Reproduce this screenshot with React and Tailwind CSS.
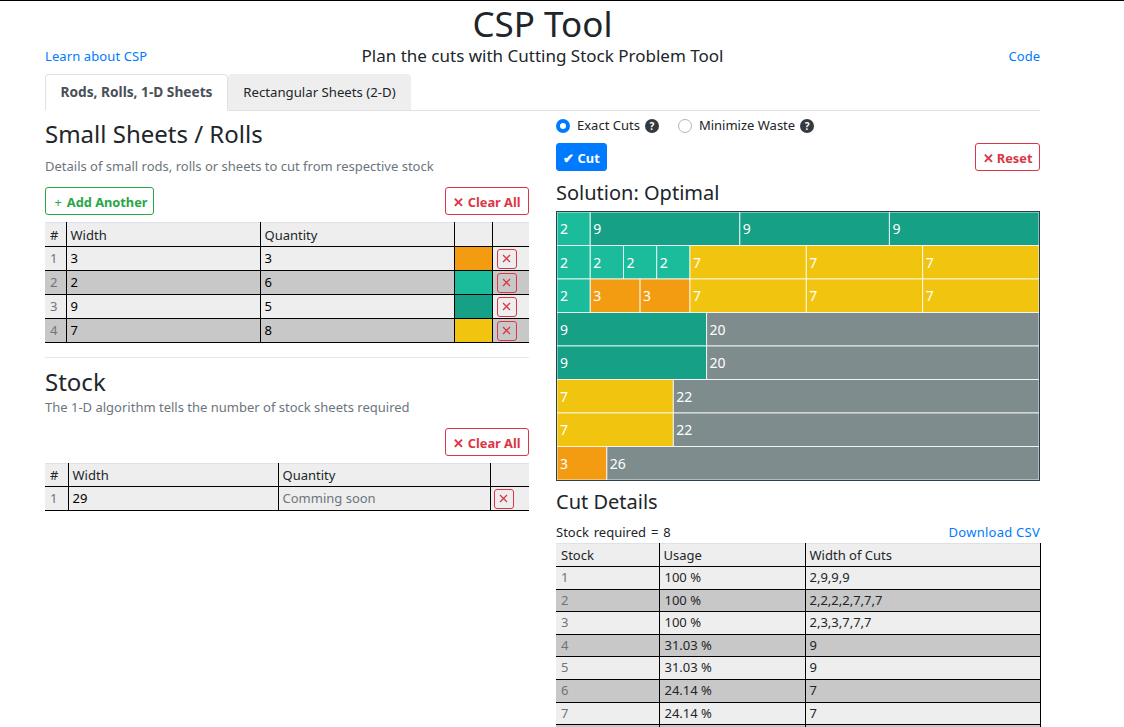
import React from "react";

const O = "#f39c12", T = "#1abc9c", G = "#16a085", Y = "#f1c40f", S = "#7f8c8d";
const rows = [
  [[2, T], [9, G], [9, G], [9, G]],
  [[2, T], [2, T], [2, T], [2, T], [7, Y], [7, Y], [7, Y]],
  [[2, T], [3, O], [3, O], [7, Y], [7, Y], [7, Y]],
  [[9, G], [20, S]],
  [[9, G], [20, S]],
  [[7, Y], [22, S]],
  [[7, Y], [22, S]],
  [[3, O], [26, S]],
];
const UNIT = 482 / 29;
const RH = 33.5;

function Chart() {
  return (
    <svg width="484" height="270" className="block">
      <g transform="translate(1,1)">
        {rows.map((row, r) => {
          let acc = 0;
          return row.map(([w, c], i) => {
            const x = acc * UNIT;
            acc += w;
            return (
              <g key={i}>
                <rect x={x} y={r * RH} width={w * UNIT} height={RH} fill={c} stroke="#ffffff" strokeOpacity="0.8" strokeWidth="1" />
                <text x={x + 3} y={r * RH + 22} fill="#fff" fontSize="14">{w}</text>
              </g>
            );
          });
        })}
      </g>
      <rect x="0.5" y="0.5" width="483" height="269" fill="none" stroke="#2c3e50" strokeWidth="1" />
    </svg>
  );
}

function XBtn() {
  return (
    <button className="flex h-[20px] w-[20px] items-center justify-center rounded-[3px] border border-[#dc3545] text-[#dc3545] text-[14px] leading-none">
      <svg width="9" height="9" viewBox="0 0 9 9"><path d="M1 1L8 8M8 1L1 8" stroke="#dc3545" strokeWidth="1.3" /></svg>
    </button>
  );
}

function BoldBtn({ children, className }) {
  return <button className={"flex h-[28px] items-center justify-center rounded-[3px] border pt-[1px] text-[12.8px] leading-[20px] font-bold " + className}>{children}</button>;
}

function Help() {
  return <span className="ml-[5px] flex h-[14px] w-[14px] items-center justify-center rounded-full bg-[#343a40] text-[10px] font-bold leading-none text-white">?</span>;
}

const rowBg = (i) => (i % 2 === 0 ? "bg-[#eeeeee]" : "bg-[#c8c8c8]");

function Items() {
  const data = [[3, 3, O], [2, 6, T], [9, 5, G], [7, 8, Y]];
  return (
    <table className="w-[484px] table-fixed border-collapse text-[13px]">
      <colgroup><col className="w-[21px]" /><col className="w-[194px]" /><col className="w-[194px]" /><col className="w-[38px]" /><col className="w-[37px]" /></colgroup>
      <thead>
        <tr className="h-[24px] bg-[#eeeeee] border-t border-t-[#dee2e6] border-b border-b-black">
          <th className="pl-[5px] pt-[2px] text-left font-normal text-[13px]">#</th>
          <th className="border-l border-black pl-[4px] pt-[2px] text-left font-normal">Width</th>
          <th className="border-l border-black pl-[4px] pt-[2px] text-left font-normal">Quantity</th>
          <th className="border-l border-black"></th>
          <th className="border-l border-black"></th>
        </tr>
      </thead>
      <tbody>
        {data.map((d, i) => (
          <tr key={i} className={"h-[24px] border-b border-b-black " + rowBg(i)}>
            <td className="pl-[5px] text-[#6c757d]">{i + 1}</td>
            <td className="border-l border-black pl-[4px] text-black">{d[0]}</td>
            <td className="border-l border-black pl-[4px] text-black">{d[1]}</td>
            <td className="border-l border-r border-black" style={{ backgroundColor: d[2] }}></td>
            <td className="pl-[4px]"><XBtn /></td>
          </tr>
        ))}
      </tbody>
    </table>
  );
}

function StockTable() {
  return (
    <table className="w-[484px] table-fixed border-collapse text-[13px]">
      <colgroup><col className="w-[23px]" /><col className="w-[210px]" /><col className="w-[212px]" /><col className="w-[39px]" /></colgroup>
      <thead>
        <tr className="h-[23px] bg-[#eeeeee] border-t border-t-[#dee2e6] border-b border-b-black">
          <th className="pl-[5px] pt-[1px] text-left font-normal">#</th>
          <th className="border-l border-black pl-[4px] pt-[1px] text-left font-normal">Width</th>
          <th className="border-l border-black pl-[4px] pt-[1px] text-left font-normal">Quantity</th>
          <th className="border-l border-black"></th>
        </tr>
      </thead>
      <tbody>
        <tr className="h-[24px] bg-[#eeeeee] border-b border-b-black">
          <td className="pl-[5px] text-[#6c757d]">1</td>
          <td className="border-l border-black pl-[4px] text-black">29</td>
          <td className="border-l border-black pl-[4px] text-[#6c757d]">Comming soon</td>
          <td className="border-l border-black pl-[3px]"><XBtn /></td>
        </tr>
      </tbody>
    </table>
  );
}

function Cuts() {
  const data = [
    ["100 %", "2,9,9,9"], ["100 %", "2,2,2,2,7,7,7"], ["100 %", "2,3,3,7,7,7"], ["31.03 %", "9"],
    ["31.03 %", "9"], ["24.14 %", "7"], ["24.14 %", "7"], ["10.34 %", "3"],
  ];
  return (
    <table className="w-[484px] table-fixed border-collapse text-[13px]">
      <colgroup><col className="w-[103px]" /><col className="w-[146px]" /><col className="w-[235px]" /></colgroup>
      <thead>
        <tr className="h-[23px] bg-[#eeeeee] border-t border-t-[#dee2e6] border-b border-b-black">
          <th className="pl-[5px] pt-[2px] text-left font-normal">Stock</th>
          <th className="border-l border-black pl-[4px] pt-[2px] text-left font-normal">Usage</th>
          <th className="border-x border-black pl-[4px] pt-[2px] text-left font-normal">Width of Cuts</th>
        </tr>
      </thead>
      <tbody>
        {data.map((d, i) => (
          <tr key={i} className={"h-[22.6px] border-b border-b-black " + rowBg(i)}>
            <td className="pl-[5px] text-[#6c757d]">{i + 1}</td>
            <td className="border-l border-black pl-[5px]">{d[0]}</td>
            <td className="border-x border-black pl-[4px]">{d[1]}</td>
          </tr>
        ))}
      </tbody>
    </table>
  );
}

export default function App() {
  return (
    <div className="h-[727px] overflow-hidden border-t border-black bg-white text-[#212529] font-['Noto_Sans',sans-serif] text-[13px]">
      <div className="ml-[45px] w-[995px]">
        <h1 className="h-[45px] text-center text-[35px] leading-[45px]">CSP Tool</h1>
        <div className="grid h-[20px] grid-cols-[1fr_auto_1fr] items-center leading-[20px]">
          <a className="text-[13px] tracking-[0.1px] text-[#007bff]">Learn about CSP</a>
          <span className="text-[17px] leading-[20px]">Plan the cuts with Cutting Stock Problem Tool</span>
          <a className="text-right text-[13px] text-[#007bff]">Code</a>
        </div>
        <div className="mt-[8px] flex h-[37px] border-b border-[#dee2e6]">
          <div className="flex h-[37px] w-[183px] items-center justify-center rounded-t border border-b-white border-[#dee2e6] bg-white text-[13.7px] font-bold text-[#495057]">Rods, Rolls, 1-D Sheets</div>
          <div className="flex h-[36px] w-[183px] items-center justify-center rounded-t bg-[#eeeeee] pt-[1px] text-[13.2px]">Rectangular Sheets (2-D)</div>
        </div>
        <div className="flex justify-between">
          <div className="w-[484px]">
            <h2 className="mt-[5px] h-[36px] text-[24px] leading-[36px]">Small Sheets / Rolls</h2>
            <p className="mt-[4px] h-[20px] leading-[20px] text-[#6c757d]">Details of small rods, rolls or sheets to cut from respective stock</p>
            <div className="mt-[11px] flex justify-between">
              <BoldBtn className="w-[109px] border-[#28a745] pl-[3px] text-[#28a745]"><span className="mr-[5px] font-normal">+</span>Add Another</BoldBtn>
              <BoldBtn className="w-[84px] border-[#dc3545] text-[#dc3545]">✕ Clear All</BoldBtn>
            </div>
            <div className="mt-[7px]"><Items /></div>
            <hr className="mt-[14px] border-[#e5e7eb]" />
            <h2 className="mt-[6px] h-[33px] text-[24px] leading-[36px]">Stock</h2>
            <p className="h-[20px] leading-[20px] text-[#6c757d]">The 1-D algorithm tells the number of stock sheets required</p>
            <div className="mt-[11px] flex justify-end">
              <BoldBtn className="w-[84px] border-[#dc3545] text-[#dc3545]">✕ Clear All</BoldBtn>
            </div>
            <div className="mt-[7px]"><StockTable /></div>
          </div>
          <div className="w-[484px]">
            <div className="mt-[5px] flex h-[20px] items-center">
              <span className="flex h-[14px] w-[14px] items-center justify-center rounded-full bg-[#007bff]"><span className="h-[6px] w-[6px] rounded-full bg-white"></span></span>
              <span className="ml-[7px]">Exact Cuts</span><Help />
              <span className="ml-[19px] h-[14px] w-[14px] rounded-full border border-[#adb5bd] bg-white"></span>
              <span className="ml-[7px]">Minimize Waste</span><Help />
            </div>
            <div className="mt-[7px] flex justify-between">
              <BoldBtn className="w-[51px] border-[#007bff] bg-[#007bff] text-white">✔ Cut</BoldBtn>
              <BoldBtn className="w-[65px] border-[#dc3545] text-[#dc3545]">✕ Reset</BoldBtn>
            </div>
            <h3 className="mt-[6px] h-[34px] text-[20px] leading-[32px]">Solution: Optimal</h3>
            <Chart />
            <h3 className="mt-[5px] h-[32px] text-[20px] leading-[32px]">Cut Details</h3>
            <div className="mt-[4px] flex h-[21px] items-center justify-between">
              <span className="[word-spacing:1.5px]">Stock required = 8</span>
              <a className="tracking-[0.25px] text-[#007bff]">Download CSV</a>
            </div>
            <Cuts />
          </div>
        </div>
      </div>
    </div>
  );
}
